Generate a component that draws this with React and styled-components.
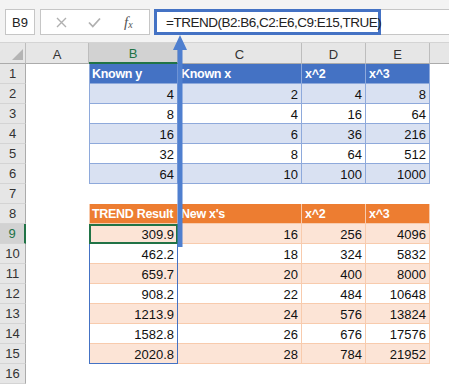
import React from "react";
import styled, { createGlobalStyle, css } from "styled-components";

const GlobalStyle = createGlobalStyle`
	html, body {
		margin: 0;
		padding: 0;
		background: #ffffff;
	}
	body {
		font-family: "Liberation Sans", Arial, sans-serif;
		color: #000;
	}
`;

const Page = styled.div`
	position: relative;
	width: 449px;
	height: 385px;
	overflow: hidden;
`;

const Toolbar = styled.div`
	display: flex;
	align-items: flex-start;
	height: 43px;
	padding-top: 9px;
	box-sizing: border-box;
	background: #f3f3f3;
	border-bottom: 1px solid #d4d4d4;
`;

const NameBox = styled.div`
	width: 30px;
	height: 26px;
	margin-left: 5px;
	box-sizing: border-box;
	border: 1px solid #c6c6c6;
	background: #fff;
	display: flex;
	align-items: center;
	justify-content: center;
	font-size: 13px;
	color: #222;
`;

const FuncButtons = styled.div`
	width: 110px;
	height: 26px;
	margin-left: 5px;
	box-sizing: border-box;
	border: 1px solid #c6c6c6;
	background: #fff;
	display: flex;
	align-items: center;
	justify-content: space-around;
	padding: 0 4px;
`;

const IconWrap = styled.span`
	display: flex;
	align-items: center;
	justify-content: center;
	width: 20px;
	color: #a6a6a6;
`;

const Fx = styled.span`
	font-family: "Liberation Serif", "Times New Roman", serif;
	font-style: italic;
	font-size: 15px;
	color: #555;
	sub {
		font-size: 10px;
		vertical-align: baseline;
		position: relative;
		top: 1px;
	}
`;

const FormulaField = styled.div`
	flex: 1;
	height: 26px;
	margin-left: 4px;
	box-sizing: border-box;
	background: #fff;
	border-top: 1px solid #c6c6c6;
	border-bottom: 1px solid #c6c6c6;
	display: flex;
	position: relative;
`;

const FormulaText = styled.div`
	position: absolute;
	left: 0;
	top: -1px;
	width: 227px;
	height: 26px;
	box-sizing: border-box;
	border: 3px solid #4472c4;
	display: flex;
	align-items: center;
	padding-left: 9px;
	font-size: 13.5px;
	letter-spacing: -0.5px;
	color: #222;
	white-space: nowrap;
`;

const Sheet = styled.div`
	display: grid;
	grid-template-columns: 26px 63px 89px 124px 64px 64px 1fr;
	grid-template-rows: 21px repeat(16, 20px);
	font-size: 13px;
`;

const Corner = styled.div`
	background: #e6e6e6;
	border-right: 1px solid #bdbdbd;
	border-bottom: 1px solid #ababab;
	position: relative;
	&::after {
		content: "";
		position: absolute;
		right: 2px;
		bottom: 3px;
		border-style: solid;
		border-width: 0 0 11px 11px;
		border-color: transparent transparent #b4b4b4 transparent;
	}
`;

const ColHead = styled.div`
	background: ${(p) => (p.$active ? "#d2d2d2" : "#e6e6e6")};
	border-right: 1px solid #bdbdbd;
	border-bottom: ${(p) => (p.$active ? "2px solid #217346" : "1px solid #ababab")};
	color: ${(p) => (p.$active ? "#217346" : "#333")};
	display: flex;
	align-items: center;
	justify-content: center;
	padding-top: 2px;
	box-sizing: border-box;
	${(p) => p.$blank && css`border-right: none;`}
`;

const RowHead = styled.div`
	background: ${(p) => (p.$active ? "#d2d2d2" : "#e6e6e6")};
	border-bottom: 1px solid #d4d4d4;
	border-right: ${(p) => (p.$active ? "2px solid #217346" : "1px solid #ababab")};
	color: ${(p) => (p.$active ? "#217346" : "#333")};
	display: flex;
	align-items: center;
	justify-content: center;
	box-sizing: border-box;
	font-size: 13px;
`;

const palettes = {
	blue: { head: "#4472c4", band: "#d9e1f2", line: "#8ea9db" },
	orange: { head: "#ed7d31", band: "#fce4d6", line: "#f8cbad" },
};

const Cell = styled.div`
	box-sizing: border-box;
	display: flex;
	align-items: center;
	justify-content: ${(p) => (p.$head ? "flex-start" : "flex-end")};
	padding: 0 4px;
	white-space: nowrap;
	overflow: hidden;
	color: #111;
	${(p) => {
		if (!p.$tone) return "";
		const c = palettes[p.$tone];
		const bg = p.$head ? c.head : p.$band ? c.band : "#fff";
		const lines = [`inset -1px -1px 0 ${c.line}`];
		if (p.$first) lines.push(`inset 1px 0 0 ${c.line}`);
		return css`
			background: ${bg};
			box-shadow: ${lines.join(", ")};
			${p.$head && css`
				color: #fff;
				font-weight: bold;
				font-size: 12.5px;
				letter-spacing: -0.3px;
				padding-left: 3px;
			`}
		`;
	}}
	${(p) => p.$selected && css`
		box-shadow: inset 0 0 0 2px #217346;
	`}
	${(p) => p.$ranged && css`
		box-shadow: inset 1px 0 0 #4472c4, inset -1px 0 0 #4472c4, inset 0 -1px 0 ${p.$last ? "#4472c4" : palettes.orange.line};
	`}
`;

const Arrow = styled.svg`
	position: absolute;
	left: 173px;
	top: 35px;
`;

const columns = ["A", "B", "C", "D", "E", ""];

const knownRows = [
	[4, 2, 4, 8],
	[8, 4, 16, 64],
	[16, 6, 36, 216],
	[32, 8, 64, 512],
	[64, 10, 100, 1000],
];

const resultRows = [
	["309.9", 16, 256, 4096],
	["462.2", 18, 324, 5832],
	["659.7", 20, 400, 8000],
	["908.2", 22, 484, 10648],
	["1213.9", 24, 576, 13824],
	["1582.8", 26, 676, 17576],
	["2020.8", 28, 784, 21952],
];

function TableRow({ values, tone, band, rowIndex }) {
	return values.map((v, i) => {
		const isResult = tone === "orange" && i === 0;
		return (
			<Cell
				key={i}
				$tone={tone}
				$band={band}
				$first={i === 0}
				$selected={isResult && rowIndex === 0}
				$ranged={isResult && rowIndex > 0}
				$last={isResult && rowIndex === resultRows.length - 1}
			>
				{v}
			</Cell>
		);
	});
}

function App() {
	const rows = [];
	for (let r = 1; r <= 16; r++) {
		rows.push(
			<RowHead key={"h" + r} $active={r === 9}>
				{r}
			</RowHead>
		);
		rows.push(<Cell key={"a" + r} />);
		if (r === 1) {
			["Known y", "Known x", "x^2", "x^3"].forEach((t, i) =>
				rows.push(
					<Cell key={"k" + i} $tone="blue" $head $first={i === 0}>
						{t}
					</Cell>
				)
			);
		} else if (r >= 2 && r <= 6) {
			rows.push(<TableRow key={"kr" + r} values={knownRows[r - 2]} tone="blue" band={r % 2 === 0} rowIndex={r - 2} />);
		} else if (r === 8) {
			["TREND Result", "New x's", "x^2", "x^3"].forEach((t, i) =>
				rows.push(
					<Cell key={"o" + i} $tone="orange" $head $first={i === 0}>
						{t}
					</Cell>
				)
			);
		} else if (r >= 9 && r <= 15) {
			rows.push(<TableRow key={"rr" + r} values={resultRows[r - 9]} tone="orange" band={r % 2 === 1} rowIndex={r - 9} />);
		} else {
			for (let i = 0; i < 4; i++) rows.push(<Cell key={"e" + r + i} />);
		}
		rows.push(<Cell key={"z" + r} />);
	}

	return (
		<Page>
			<GlobalStyle />
			<Toolbar>
				<NameBox>B9</NameBox>
				<FuncButtons>
					<IconWrap>
						<svg width="11" height="11" viewBox="0 0 11 11">
							<path d="M1 1 L10 10 M10 1 L1 10" stroke="#b0b0b0" strokeWidth="1.4" fill="none" />
						</svg>
					</IconWrap>
					<IconWrap>
						<svg width="13" height="11" viewBox="0 0 13 11">
							<path d="M1 5.5 L4.8 9.5 L12 1.5" stroke="#b0b0b0" strokeWidth="1.8" fill="none" />
						</svg>
					</IconWrap>
					<IconWrap>
						<Fx>
							f<sub>x</sub>
						</Fx>
					</IconWrap>
				</FuncButtons>
				<FormulaField>
					<FormulaText>=TREND(B2:B6,C2:E6,C9:E15,TRUE)</FormulaText>
				</FormulaField>
			</Toolbar>
			<Sheet>
				<Corner />
				{columns.map((c, i) => (
					<ColHead key={i} $active={c === "B"} $blank={c === ""}>
						{c}
					</ColHead>
				))}
				{rows}
			</Sheet>
			<Arrow width="14" height="212" viewBox="0 0 14 212">
				<polygon points="7,0 14,15 0,15" fill="#4f7fcf" />
				<rect x="4.5" y="14" width="5" height="198" fill="#4f7fcf" />
			</Arrow>
		</Page>
	);
}

export default App;
